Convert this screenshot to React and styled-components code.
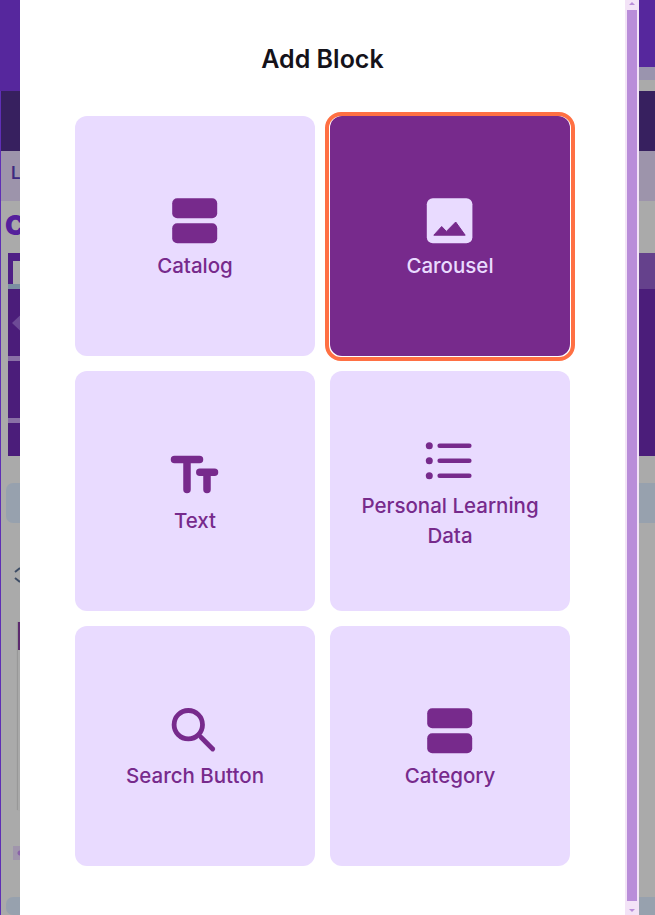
import React from 'react';
import styled, { createGlobalStyle } from 'styled-components';

const GlobalStyle = createGlobalStyle`
  html, body {
    margin: 0;
    padding: 0;
    background: #aaaaaa;
    font-family: "Inter", "Liberation Sans", sans-serif;
  }
`;

const blocks = [
  { label: 'Catalog', icon: 'rows' },
  { label: 'Carousel', icon: 'image', selected: true },
  { label: 'Text', icon: 'text' },
  { label: 'Personal Learning Data', icon: 'list' },
  { label: 'Search Button', icon: 'search' },
  { label: 'Category', icon: 'rows' },
];

const BlockIcon = ({ name }) => {
  if (name === 'rows') {
    return (
      <IconSvg viewBox="0 0 60 60" fill="currentColor">
        <rect x="7.2" y="7.2" width="45" height="20" rx="5" />
        <rect x="7.2" y="32.2" width="45" height="20" rx="5" />
      </IconSvg>
    );
  }
  if (name === 'image') {
    return (
      <IconSvg viewBox="0 0 60 60">
        <rect x="6.8" y="7.2" width="45.6" height="45" rx="6" fill="currentColor" />
        <path
          d="M13.8 44.2 L21.7 35.5 L26.4 40.4 L35.7 31 L45.2 44.2 Z"
          fill="#772a8c"
          stroke="#772a8c"
          strokeWidth="1"
          strokeLinejoin="round"
        />
      </IconSvg>
    );
  }
  if (name === 'text') {
    return (
      <IconSvg viewBox="0 0 60 60" fill="none" stroke="currentColor" strokeWidth="7.5" strokeLinecap="round">
        <path d="M9.5 13.5 H34.5 M22 13.5 V43.5" />
        <path d="M34.8 26.2 H49.5 M42 26.2 V43.5" />
      </IconSvg>
    );
  }
  if (name === 'list') {
    return (
      <IconSvg viewBox="0 0 60 60" fill="currentColor">
        <circle cx="9.3" cy="14.7" r="3.5" />
        <circle cx="9.3" cy="29.7" r="3.5" />
        <circle cx="9.3" cy="44.7" r="3.5" />
        <path
          d="M19.7 14.7 H49.3 M19.7 29.7 H49.3 M19.7 44.7 H49.3"
          fill="none"
          stroke="currentColor"
          strokeWidth="4.6"
          strokeLinecap="round"
        />
      </IconSvg>
    );
  }
  return (
    <IconSvg viewBox="0 0 60 60" fill="none" stroke="currentColor" strokeWidth="4.8" strokeLinecap="round">
      <circle cx="23.3" cy="23.7" r="14.2" />
      <path d="M36 36.3 L47.7 48" />
    </IconSvg>
  );
};

const App = () => (
  <>
    <GlobalStyle />
    <Page>
      <Hero>
        <HeroTab />
        <HeroGap />
      </Hero>
      <DarkBar />
      <SubBar>L</SubBar>
      <SectionTitle>C</SectionTitle>
      <Editor>
        <EditorHead>
          <EditorTabs>
            <EditorField />
            <EditorLine />
          </EditorTabs>
        </EditorHead>
        <Slide $height={67}>
          <SlideArrow />
        </Slide>
        <SlideDivider />
        <Slide $height={57} />
        <SlideDivider />
        <Slide $height={33} />
      </Editor>
      <Pill $top={27} $height={40} />
      <Sorter>
        <svg width="8" height="16" viewBox="0 0 8 16" fill="none" stroke="#3e4d66" strokeWidth="2">
          <path d="M7 1 L2 5 M2 11 L7 15" />
        </svg>
      </Sorter>
      <PreviewCard>
        <PreviewHead />
      </PreviewCard>
      <Tag />
      <Pill $top={37} $height={18} />

      <Modal>
        <ModalBody>
          <Title>Add Block</Title>
          <BlockGrid>
            {blocks.map((b) => (
              <BlockCard key={b.label} $selected={b.selected}>
                <BlockIcon name={b.icon} />
                <BlockLabel>{b.label}</BlockLabel>
              </BlockCard>
            ))}
          </BlockGrid>
        </ModalBody>
        <ScrollTrack>
          <ScrollArrow />
          <ScrollThumb />
          <ScrollArrow $down />
        </ScrollTrack>
      </Modal>
    </Page>
  </>
);

const Page = styled.div`
  position: relative;
  width: 655px;
  height: 915px;
  overflow: hidden;
  display: flex;
  flex-direction: column;
  background: #aaaaaa;
  box-shadow: inset 1px 0 0 #5f2fb5;
`;

const Hero = styled.div`
  height: 91px;
  flex: none;
  display: flex;
  flex-direction: column;
  align-items: flex-end;
  padding-top: 67px;
  box-sizing: border-box;
  background: #56279d;
`;

const HeroTab = styled.div`
  width: 100px;
  height: 13px;
  background: #9a94ae;
`;

const HeroGap = styled.div`
  width: 100px;
  height: 11px;
  background: #aaaaaa;
`;

const DarkBar = styled.div`
  height: 60px;
  flex: none;
  margin-left: 1px;
  background: #37205f;
`;

const SubBar = styled.div`
  height: 50px;
  flex: none;
  margin-left: 1px;
  padding-left: 10px;
  box-sizing: border-box;
  background: #9d94ab;
  color: #3d2a80;
  font-size: 17px;
  font-weight: 600;
  line-height: 44px;
`;

const SectionTitle = styled.div`
  height: 52px;
  flex: none;
  padding-left: 5px;
  box-sizing: border-box;
  color: #55209c;
  font-size: 27px;
  font-weight: 900;
  line-height: 50px;
`;

const Editor = styled.div`
  flex: none;
  margin-left: 8px;
  display: flex;
  flex-direction: column;
  background: #4b1d7a;
`;

const EditorHead = styled.div`
  height: 36px;
  display: flex;
  background: #65418c;
`;

const EditorTabs = styled.div`
  width: 300px;
  display: flex;
  flex-direction: column;
  padding-top: 8px;
  box-sizing: border-box;
  background: #4f1f85;
`;

const EditorField = styled.div`
  height: 23px;
  margin-left: 5px;
  background: #ababab;
`;

const EditorLine = styled.div`
  height: 5px;
  background: #7b8fa1;
`;

const Slide = styled.div`
  position: relative;
  height: ${(p) => p.$height}px;
`;

const SlideArrow = styled.div`
  position: absolute;
  left: 4px;
  top: 19px;
  width: 16px;
  height: 30px;
  background: #6d4a96;
  clip-path: polygon(100% 0, 100% 100%, 0 50%);
`;

const SlideDivider = styled.div`
  width: 300px;
  height: 5px;
  background: #8a70a6;
`;

const Pill = styled.div`
  flex: none;
  height: ${(p) => p.$height}px;
  margin: ${(p) => p.$top}px 0 0 6px;
  border-radius: 7px 0 0 7px;
  background: #97a1ae;
`;

const Sorter = styled.div`
  flex: none;
  height: 16px;
  margin: 44px 0 0 13px;
`;

const PreviewCard = styled.div`
  flex: none;
  width: 300px;
  height: 188px;
  margin: 39px 0 0 18px;
  background: #a9a9a9;
  box-shadow: -1px 0 1px rgba(0, 0, 0, 0.1);
`;

const PreviewHead = styled.div`
  height: 28px;
  background: #5c2a6e;
`;

const Tag = styled.div`
  flex: none;
  width: 40px;
  height: 14px;
  margin: 36px 0 0 13px;
  background: radial-gradient(circle at 7px 7px, #8a63a8 2px, #a095ac 3px);
`;

const Modal = styled.div`
  position: absolute;
  top: 0;
  left: 20px;
  width: 619px;
  height: 915px;
  display: flex;
  background: #ffffff;
`;

const ModalBody = styled.div`
  width: 605px;
  flex: none;
  padding: 41px 55px 0;
  box-sizing: border-box;
`;

const Title = styled.h2`
  margin: 0 0 39px;
  color: #15121a;
  font-size: 25px;
  font-weight: 600;
  line-height: 36px;
  text-align: center;
`;

const BlockGrid = styled.div`
  display: grid;
  grid-template-columns: repeat(2, 240px);
  grid-auto-rows: 240px;
  gap: 15px;
`;

const BlockCard = styled.div`
  position: relative;
  display: flex;
  flex-direction: column;
  align-items: center;
  justify-content: center;
  padding: 0 20px;
  border-radius: 12px;
  background: ${(p) => (p.$selected ? '#772a8c' : '#e9dbff')};
  color: ${(p) => (p.$selected ? '#e9dbff' : '#772a8c')};

  ${(p) =>
    p.$selected &&
    `
    &::before {
      content: '';
      position: absolute;
      top: -4px;
      left: -5px;
      right: -5px;
      bottom: -5px;
      border: 4px solid #ff7043;
      border-radius: 16px;
    }
  `}
`;

const IconSvg = styled.svg`
  display: block;
  width: 60px;
  height: 60px;
  flex: none;
`;

const BlockLabel = styled.div`
  font-size: 20.5px;
  font-weight: 500;
  line-height: 30px;
  text-align: center;
`;

const ScrollTrack = styled.div`
  width: 14px;
  flex: none;
  display: flex;
  flex-direction: column;
  align-items: center;
  background: #f3e3f7;
`;

const ScrollArrow = styled.div`
  flex: none;
  width: 0;
  height: 0;
  margin: ${(p) => (p.$down ? '8px 0 3px' : '2px 0 5px')};
  border-left: 3px solid transparent;
  border-right: 3px solid transparent;
  border-${(p) => (p.$down ? 'top' : 'bottom')}: 3px solid #b98dd9;
`;

const ScrollThumb = styled.div`
  flex: 1;
  width: 10px;
  background: #b98dd9;
`;

export default App;
